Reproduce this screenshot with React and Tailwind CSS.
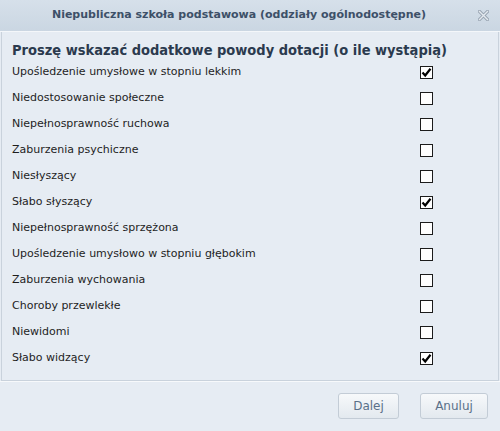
import React from "react";

const items = [
  { label: "Upośledzenie umysłowe w stopniu lekkim", checked: true },
  { label: "Niedostosowanie społeczne", checked: false },
  { label: "Niepełnosprawność ruchowa", checked: false },
  { label: "Zaburzenia psychiczne", checked: false },
  { label: "Niesłyszący", checked: false },
  { label: "Słabo słyszący", checked: true },
  { label: "Niepełnosprawność sprzężona", checked: false },
  { label: "Upośledzenie umysłowo w stopniu głębokim", checked: false },
  { label: "Zaburzenia wychowania", checked: false },
  { label: "Choroby przewlekłe", checked: false },
  { label: "Niewidomi", checked: false },
  { label: "Słabo widzący", checked: true },
];

const Box = ({ checked }) => (
  <div className="w-[13px] h-[13px] border border-[#1c1c1c] bg-white flex items-center justify-center">
    {checked && (
      <svg width="11" height="11" viewBox="0 0 11 11">
        <path d="M1.5 5.5 L4.2 8.5 L9.5 1.8" stroke="#000" strokeWidth="2.2" fill="none" />
      </svg>
    )}
  </div>
);

export default function App() {
  return (
    <div
      className="w-[500px] h-[431px] bg-[#e6ecf3] flex flex-col overflow-hidden"
      style={{ fontFamily: '"DejaVu Sans", Verdana, sans-serif' }}
    >
      {/* title bar */}
      <div className="h-[32px] shrink-0 bg-gradient-to-b from-[#d6e0ea] to-[#cad6e2] border-b border-[#f4f7fa] flex items-center relative">
        <div className="flex-1 text-center text-[11px] font-bold text-[#3d5068] pr-[22px]">
          Niepubliczna szkoła podstawowa (oddziały ogólnodostępne)
        </div>
        <svg className="absolute right-[11px] top-[10px]" width="11" height="11" viewBox="0 0 11 11">
          <path d="M1.5 1.5 L9.5 9.5 M9.5 1.5 L1.5 9.5" stroke="#97a3b1" strokeWidth="3.2" strokeLinecap="square" />
          <path d="M1.5 1.5 L9.5 9.5 M9.5 1.5 L1.5 9.5" stroke="#e4e9ef" strokeWidth="1.4" strokeLinecap="square" />
        </svg>
      </div>

      {/* content */}
      <div className="h-[349px] shrink-0 mx-px border-x border-b border-[#c9d2dc] bg-[#e6ecf3] px-[10px] pt-[9px]">
        <div
          className="text-[14.5px] font-bold font-stretch-condensed text-[#2b3a4e] leading-[18px] whitespace-nowrap"
          style={{ fontFamily: '"DejaVu Sans Condensed", "DejaVu Sans", sans-serif' }}
        >
          Proszę wskazać dodatkowe powody dotacji (o ile wystąpią)
        </div>
        <div className="flex flex-col">
          {items.map((it, i) => (
            <div key={i} className="h-[26px] flex items-center justify-between pr-[55px]">
              <span className="text-[11px] text-[#1e1e1e]">{it.label}</span>
              <Box checked={it.checked} />
            </div>
          ))}
        </div>
      </div>

      {/* footer */}
      <div className="flex-1 border-t border-[#f7f9fb] flex justify-end items-start gap-[21px] pr-[12px] pt-[11px]">
        <button className="w-[61px] h-[26px] rounded-[3px] border border-[#c3ccd6] bg-gradient-to-b from-[#f7f9fb] to-[#e3e9ef] text-[12px] text-[#5a7089]">
          Dalej
        </button>
        <button className="w-[68px] h-[26px] rounded-[3px] border border-[#c3ccd6] bg-gradient-to-b from-[#f7f9fb] to-[#e3e9ef] text-[12px] text-[#5a7089]">
          Anuluj
        </button>
      </div>
    </div>
  );
}
